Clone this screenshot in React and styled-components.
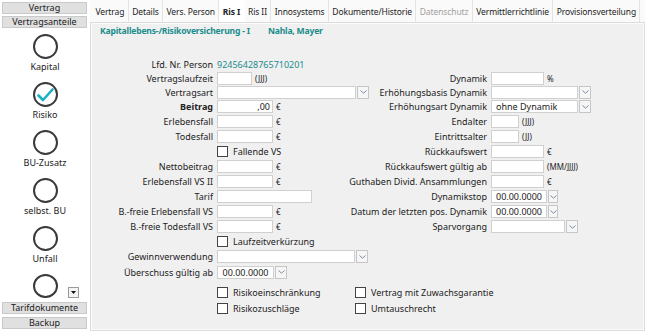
import React from "react";
import styled, { createGlobalStyle } from "styled-components";

const Global = createGlobalStyle`
  html, body { margin: 0; padding: 0; background: #ffffff; }
  body { font-family: "Noto Sans", "Open Sans", sans-serif; font-size: 9px; color: #222; }
  * { box-sizing: border-box; }
`;

const Page = styled.div`
  display: flex;
  width: 648px;
  height: 334px;
  overflow: hidden;
`;

const Sidebar = styled.div`
  width: 90px;
  flex: none;
  padding: 2px 2px 0 2px;
  display: flex;
  flex-direction: column;
  align-items: stretch;
`;

const SideButton = styled.div`
  height: 12px;
  margin-bottom: ${(p) => p.$mb || 0}px;
  margin-top: ${(p) => p.$mt || 0}px;
  background: #e0e0e0;
  border: 1px solid #c9c9c9;
  display: flex;
  align-items: center;
  justify-content: center;
  font-size: 9px;
  line-height: 10px;
  color: #1a1a1a;
  width: 85px;
`;

const Items = styled.div`
  margin-top: 6px;
  display: flex;
  flex-direction: column;
`;

const Item = styled.div`
  height: ${(p) => (p.$last ? 24 : 48)}px;
  display: flex;
  flex-direction: column;
  align-items: center;
  width: 86px;
  position: relative;
`;

const Circle = styled.div`
  width: 25px;
  height: 25px;
  border-radius: 50%;
  border: 2px solid #3a3a3a;
  display: flex;
  align-items: center;
  justify-content: center;
  margin-left: 1px;
`;

const ItemLabel = styled.div`
  margin-top: 2px;
  font-size: 9px;
  line-height: 12px;
  color: #222;
`;

const SmallDrop = styled.div`
  position: absolute;
  left: 66px;
  top: 13px;
  width: 11px;
  height: 11px;
  background: #f4f4f4;
  border: 1px solid #9a9a9a;
  display: flex;
  align-items: center;
  justify-content: center;
`;

const Main = styled.div`
  flex: 1;
  min-width: 0;
  display: flex;
  flex-direction: column;
  padding-right: 3px;
`;

const TabBar = styled.div`
  height: 22px;
  display: flex;
  align-items: stretch;
  padding-left: 2px;
  background: #fafafa;
`;

const Tab = styled.div`
  padding: 0 3.4px;
  display: flex;
  align-items: center;
  font-size: 8.5px;
  letter-spacing: -0.1px;
  font-weight: ${(p) => (p.$active ? 700 : 400)};
  color: ${(p) => (p.$disabled ? "#a0a0a0" : "#222")};
  background: ${(p) => (p.$active ? "#ffffff" : "transparent")};
  border-right: 1px solid ${(p) => (p.$active ? "#ffffff" : "#e4e4e4")};
  white-space: nowrap;
  flex: none;
`;

const Panel = styled.div`
  height: 309px;
  background: #f0f0f0;
  border: 1px solid #dcdcdc;
  box-shadow: inset 0 0 0 1px #fbfbfb;
  padding: 1px 0 0 9px;
`;

const Header = styled.div`
  display: flex;
  height: 14px;
  align-items: center;
  font-weight: 700;
  color: #1a8c8c;
  font-size: 8.6px;
  letter-spacing: -0.2px;
`;

const HeaderName = styled.span`
  margin-left: ${(p) => p.$ml}px;
`;

const Form = styled.div`
  margin-top: 20px;
  margin-left: -7px;
  display: grid;
  grid-template-columns: 120px 143px 123px 1fr;
  column-gap: 4px;
  grid-template-rows: 13px 14px 14px 15px 15px 15px 15px 15px 15px 15px 15px 15px 15px 15px 16px;
`;

const Label = styled.div`
  display: flex;
  align-items: center;
  justify-content: flex-end;
  white-space: nowrap;
  font-weight: ${(p) => (p.$bold ? 700 : 400)};
`;

const Cell = styled.div`
  display: flex;
  align-items: center;
  gap: 4px;
  white-space: nowrap;
  grid-column: ${(p) => p.$col || "auto"};
`;

const Value = styled.span`
  color: #1a8c8c;
`;

const Input = styled.div`
  width: ${(p) => p.$w}px;
  height: 13px;
  background: #fff;
  border: 1px solid #d0d0d0;
  display: flex;
  align-items: center;
  justify-content: flex-end;
  padding: 0 2px;
  font-size: 9px;
  flex: none;
`;

const Unit = styled.span`
  font-size: 8px;
  margin-left: -1px;
`;

const SelectBox = styled.div`
  width: ${(p) => p.$w}px;
  height: 13px;
  display: flex;
  align-items: stretch;
  flex: none;
  gap: 1px;
`;

const SelectField = styled.div`
  flex: 1;
  background: #fff;
  border: 1px solid #d0d0d0;
  display: flex;
  align-items: center;
  justify-content: ${(p) => (p.$center ? "center" : "flex-start")};
  padding: 0 4px;
  font-size: 9px;
`;

const Arrow = styled.div`
  width: 12px;
  background: #f6f6f6;
  border: 1px solid #c6c6c6;
  display: flex;
  align-items: center;
  justify-content: center;
`;

const CheckRow = styled.div`
  display: flex;
  align-items: center;
  gap: 5px;
  width: ${(p) => p.$w || "auto"};
  flex: none;
`;

const Box = styled.div`
  width: 11px;
  height: 11px;
  background: #fff;
  border: 1px solid #444;
`;

const BottomChecks = styled.div`
  margin-top: 6px;
  margin-left: 117px;
  display: flex;
  flex-direction: column;
  gap: 4px;
`;

const BottomRow = styled.div`
  display: flex;
  height: 12px;
  align-items: center;
`;

const Chevron = () => (
  <svg width="7" height="4" viewBox="0 0 7 4">
    <path d="M0.5 0.5 L3.5 3.2 L6.5 0.5" fill="none" stroke="#6a7f9a" strokeWidth="0.9" />
  </svg>
);

const Select = ({ w, text, center }) => (
  <SelectBox $w={w}>
    <SelectField $center={center}>{text}</SelectField>
    <Arrow>
      <Chevron />
    </Arrow>
  </SelectBox>
);

const Check = ({ label, w }) => (
  <CheckRow $w={w}>
    <Box />
    <span>{label}</span>
  </CheckRow>
);

const items = ["Kapital", "Risiko", "BU-Zusatz", "selbst. BU", "Unfall"];

export default function App() {
  return (
    <Page>
      <Global />
      <Sidebar>
        <SideButton $mb={2}>Vertrag</SideButton>
        <SideButton>Vertragsanteile</SideButton>
        <Items>
          {items.map((it) => (
            <Item key={it}>
              <Circle>
                {it === "Risiko" && (
                  <svg width="17" height="14" viewBox="0 0 17 14">
                    <path d="M1.5 7.5 L6 12 L15.5 1.5" fill="none" stroke="#1ab0c4" strokeWidth="2.6" strokeLinecap="round" strokeLinejoin="round" />
                  </svg>
                )}
              </Circle>
              <ItemLabel>{it}</ItemLabel>
            </Item>
          ))}
          <Item $last>
            <Circle />
            <SmallDrop>
              <svg width="5" height="3" viewBox="0 0 5 3">
                <path d="M0 0 L5 0 L2.5 3 Z" fill="#111" />
              </svg>
            </SmallDrop>
          </Item>
        </Items>
        <SideButton $mt={4} $mb={3}>Tarifdokumente</SideButton>
        <SideButton>Backup</SideButton>
      </Sidebar>
      <Main>
        <TabBar>
          <Tab>Vertrag</Tab>
          <Tab>Details</Tab>
          <Tab>Vers. Person</Tab>
          <Tab $active>Ris I</Tab>
          <Tab>Ris II</Tab>
          <Tab>Innosystems</Tab>
          <Tab>Dokumente/Historie</Tab>
          <Tab $disabled>Datenschutz</Tab>
          <Tab>Vermittlerrichtlinie</Tab>
          <Tab>Provisionsverteilung</Tab>
        </TabBar>
        <Panel>
          <Header>
            <span>Kapitallebens-/Risikoversicherung - I</span>
            <HeaderName $ml={18}>Nahla, Mayer</HeaderName>
          </Header>
          <Form>
            <Label>Lfd. Nr. Person</Label>
            <Cell $col="2 / span 3"><Value>92456428765710201</Value></Cell>

            <Label>Vertragslaufzeit</Label>
            <Cell><Input $w={35} /><Unit>(JJJ)</Unit></Cell>
            <Label>Dynamik</Label>
            <Cell><Input $w={53} /><Unit>%</Unit></Cell>

            <Label>Vertragsart</Label>
            <Cell><Select w={152} /></Cell>
            <Label>Erhöhungsbasis Dynamik</Label>
            <Cell><Select w={100} /></Cell>

            <Label $bold>Beitrag</Label>
            <Cell><Input $w={56}>,00</Input><Unit>€</Unit></Cell>
            <Label>Erhöhungsart Dynamik</Label>
            <Cell><Select w={100} text="ohne Dynamik" /></Cell>

            <Label>Erlebensfall</Label>
            <Cell><Input $w={56} /><Unit>€</Unit></Cell>
            <Label>Endalter</Label>
            <Cell><Input $w={28} /><Unit>(JJJ)</Unit></Cell>

            <Label>Todesfall</Label>
            <Cell><Input $w={56} /><Unit>€</Unit></Cell>
            <Label>Eintrittsalter</Label>
            <Cell><Input $w={28} /><Unit>(JJ)</Unit></Cell>

            <div />
            <Cell><Check label="Fallende VS" /></Cell>
            <Label>Rückkaufswert</Label>
            <Cell><Input $w={53} /><Unit>€</Unit></Cell>

            <Label>Nettobeitrag</Label>
            <Cell><Input $w={56} /><Unit>€</Unit></Cell>
            <Label>Rückkaufswert gültig ab</Label>
            <Cell><Input $w={53} /><Unit>(MM/JJJJ)</Unit></Cell>

            <Label>Erlebensfall VS II</Label>
            <Cell><Input $w={56} /><Unit>€</Unit></Cell>
            <Label>Guthaben Divid. Ansammlungen</Label>
            <Cell><Input $w={53} /><Unit>€</Unit></Cell>

            <Label>Tarif</Label>
            <Cell><Input $w={95} /></Cell>
            <Label>Dynamikstop</Label>
            <Cell><Select w={67} text="00.00.0000" center /></Cell>

            <Label>B.-freie Erlebensfall VS</Label>
            <Cell><Input $w={56} /><Unit>€</Unit></Cell>
            <Label>Datum der letzten pos. Dynamik</Label>
            <Cell><Select w={67} text="00.00.0000" center /></Cell>

            <Label>B.-freie Todesfall VS</Label>
            <Cell><Input $w={56} /><Unit>€</Unit></Cell>
            <Label>Sparvorgang</Label>
            <Cell><Select w={87} /></Cell>

            <div />
            <Cell $col="2 / span 3"><Check label="Laufzeitverkürzung" /></Cell>

            <Label>Gewinnverwendung</Label>
            <Cell $col="2 / span 3"><Select w={151} /></Cell>

            <Label>Überschuss gültig ab</Label>
            <Cell $col="2 / span 3"><Select w={70} text="00.00.0000" center /></Cell>
          </Form>
          <BottomChecks>
            <BottomRow>
              <Check label="Risikoeinschränkung" w="138px" />
              <Check label="Vertrag mit Zuwachsgarantie" />
            </BottomRow>
            <BottomRow>
              <Check label="Risikozuschläge" w="138px" />
              <Check label="Umtauschrecht" />
            </BottomRow>
          </BottomChecks>
        </Panel>
      </Main>
    </Page>
  );
}
